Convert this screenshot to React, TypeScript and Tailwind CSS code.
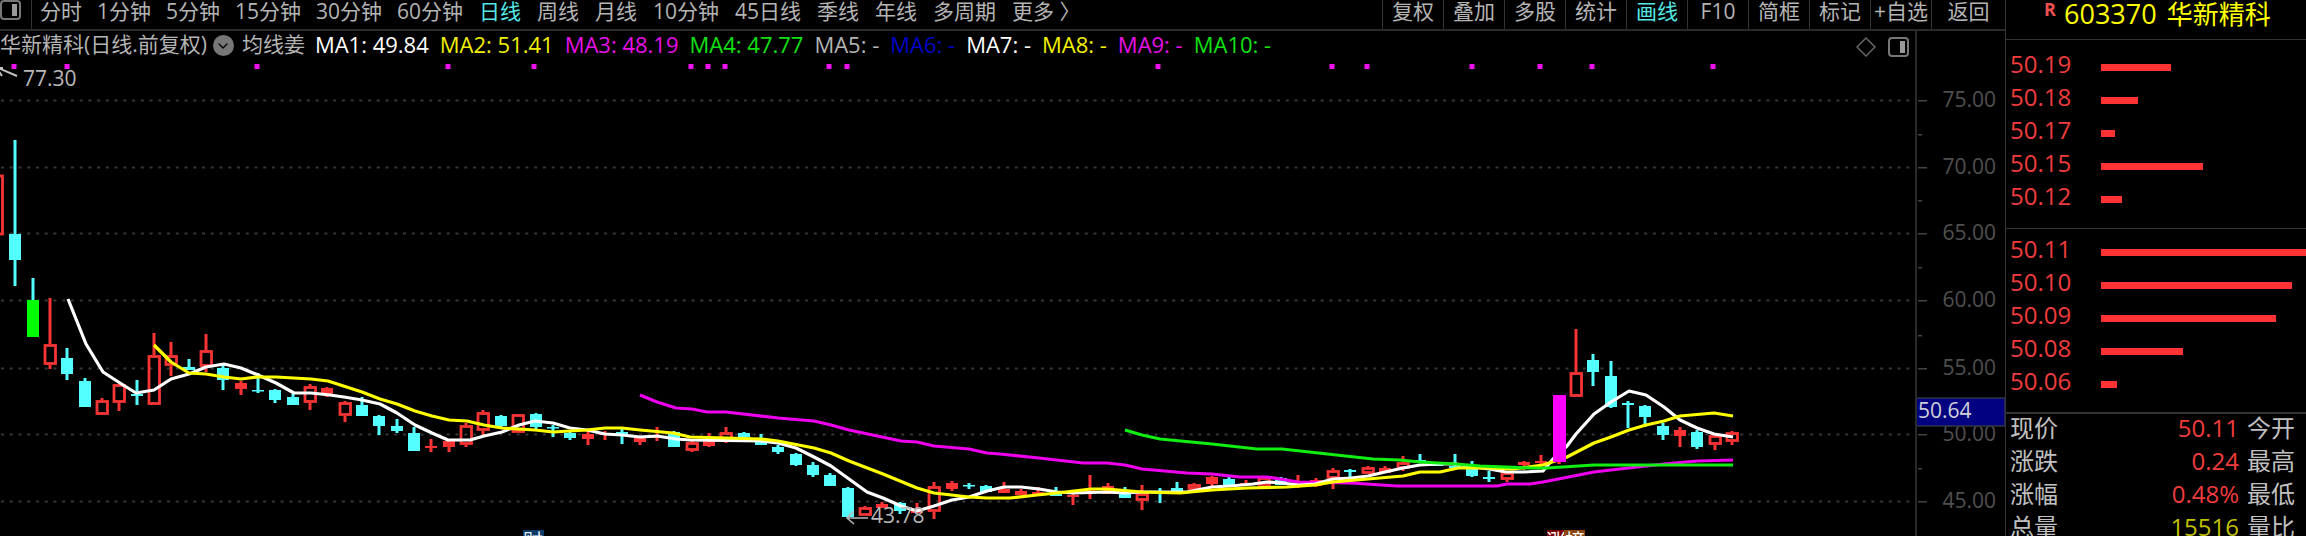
import { useState } from 'react';
import { ChevronDown } from 'lucide-react';

type Kind = 'up' | 'upFill' | 'down' | 'drop' | 'limit';
// kind, high, body top, body bottom, low
type Candle = [Kind, number, number, number, number];

const STEP = 17.34;
const FIRST_X = 15.3;

const candles: Candle[] = [
  ['down', 140, 234, 260, 286], ['drop', 278, 300, 337, 337], ['up', 298, 344, 365, 369],
  ['down', 348, 358, 374, 380], ['down', 378, 381, 407, 407], ['up', 398, 400, 415, 415],
  ['up', 384, 384, 403, 411], ['down', 380, 394, 396, 405], ['up', 333, 355, 405, 405],
  ['up', 342, 355, 366, 376], ['down', 359, 367, 370, 370], ['up', 334, 350, 367, 372],
  ['down', 365, 368, 380, 390], ['upFill', 381, 383, 389, 395], ['down', 373, 390, 391, 393],
  ['down', 389, 390, 400, 403], ['down', 394, 397, 405, 405], ['up', 384, 386, 403, 410],
  ['upFill', 387, 388, 394, 397], ['up', 401, 402, 416, 422], ['down', 397, 405, 416, 416],
  ['down', 415, 416, 426, 435], ['down', 419, 426, 431, 433], ['down', 427, 433, 451, 451],
  ['upFill', 439, 446, 448, 452], ['upFill', 440, 441, 447, 452], ['up', 423, 425, 445, 447],
  ['up', 410, 412, 431, 437], ['down', 415, 416, 426, 427], ['up', 414, 414, 433, 433],
  ['down', 413, 414, 427, 429], ['down', 425, 427, 428, 437], ['down', 431, 433, 438, 440],
  ['upFill', 431, 434, 439, 445], ['upFill', 431, 433, 435, 440], ['down', 429, 432, 434, 444],
  ['upFill', 436, 438, 442, 445], ['upFill', 427, 436, 438, 441], ['down', 431, 432, 447, 447],
  ['up', 441, 442, 451, 452], ['upFill', 433, 440, 446, 447], ['up', 427, 432, 440, 443],
  ['down', 432, 433, 437, 440], ['down', 434, 438, 445, 445], ['down', 445, 447, 452, 454],
  ['down', 453, 454, 465, 466], ['down', 462, 465, 475, 477], ['down', 473, 475, 486, 486],
  ['down', 487, 488, 517, 517], ['up', 506, 507, 516, 516], ['upFill', 502, 504, 508, 508],
  ['down', 502, 503, 511, 514], ['upFill', 503, 509, 513, 513], ['up', 482, 486, 512, 519],
  ['upFill', 481, 483, 489, 491], ['down', 483, 485, 486, 489], ['down', 485, 486, 492, 492],
  ['upFill', 482, 489, 493, 493], ['upFill', 489, 491, 495, 495], ['upFill', 487, 492, 495, 495],
  ['down', 487, 493, 496, 496], ['upFill', 493, 495, 497, 505], ['upFill', 475, 489, 490, 499],
  ['upFill', 483, 486, 494, 494], ['down', 487, 493, 498, 498], ['up', 485, 493, 501, 510],
  ['down', 488, 492, 493, 503], ['down', 482, 488, 491, 491], ['up', 483, 484, 490, 490],
  ['upFill', 476, 477, 484, 487], ['down', 477, 479, 485, 485], ['upFill', 480, 483, 485, 485],
  ['up', 477, 477, 486, 486], ['down', 477, 478, 485, 485], ['upFill', 475, 484, 487, 488],
  ['upFill', 478, 480, 486, 487], ['up', 468, 470, 479, 489], ['down', 469, 470, 472, 477],
  ['up', 466, 467, 474, 474], ['upFill', 466, 468, 473, 473], ['up', 456, 462, 469, 471],
  ['down', 454, 460, 463, 463], ['down', 462, 464, 466, 466], ['down', 454, 466, 468, 468],
  ['down', 461, 469, 476, 477], ['down', 471, 477, 479, 482], ['up', 472, 472, 480, 482],
  ['upFill', 461, 462, 465, 470], ['upFill', 455, 461, 463, 464], ['limit', 395, 395, 462, 464],
  ['up', 329, 372, 397, 397], ['down', 354, 360, 372, 386], ['down', 361, 376, 407, 408],
  ['down', 401, 403, 405, 428], ['down', 405, 406, 417, 427], ['down', 423, 426, 435, 440],
  ['upFill', 427, 430, 436, 447], ['down', 430, 432, 447, 449], ['up', 435, 435, 445, 450],
  ['up', 431, 432, 442, 445],
];

const colors: Record<Kind, string> = {
  up: '#f83434',
  upFill: '#ff3333',
  down: '#54ffff',
  drop: '#00ff00',
  limit: '#ff00ff',
};

const averages = [
  {
    color: '#ee00ee',
    points:
      '640,395 657,402 676,408 692,409 707,412 726,412 778,418 814,421 831,425 849,430 901,441 917,442 934,446 969,449 987,453 1000,454 1039,458 1083,463 1107,463 1125,465 1142,469 1187,473 1212,474 1240,477 1267,477 1298,482 1351,483 1397,486 1497,486 1507,484 1530,484 1543,482 1594,472 1611,470 1664,464 1697,461 1733,460',
  },
  {
    color: '#ffffff',
    points:
      '68,299 86,344 103,372 120,383 136,393 154,390 171,379 189,374 206,367 224,364 241,368 258,375 276,383 294,393 311,393 330,395 344,397 362,400 380,404 397,413 415,425 432,433 448,440 470,440 484,436 502,432 519,425 535,421 553,423 570,428 587,430 605,434 622,435 640,437 657,436 676,439 690,440 761,441 778,443 796,448 814,457 831,466 849,479 867,492 883,498 901,506 917,511 934,506 952,500 969,497 987,491 1004,487 1021,487 1039,489 1057,492 1074,493 1107,492 1125,493 1142,492 1187,492 1212,487 1230,486 1253,484 1267,482 1282,483 1298,485 1315,484 1333,479 1351,478 1368,476 1385,472 1403,468 1420,465 1438,464 1456,464 1473,467 1489,469 1506,472 1524,472 1543,471 1553,459 1567,446 1576,434 1594,414 1611,402 1629,391 1646,395 1664,407 1680,420 1697,428 1714,434 1733,437',
  },
  {
    color: '#ffff00',
    points:
      '154,345 171,362 189,373 206,374 224,377 241,379 258,377 276,377 311,379 328,381 362,392 380,399 397,404 415,411 432,416 449,420 467,421 484,425 502,428 535,430 553,432 570,431 587,430 605,428 622,428 640,430 673,433 690,437 727,438 761,439 778,441 814,448 831,453 849,461 883,474 917,488 934,493 969,497 987,498 1010,498 1037,495 1057,493 1091,489 1107,489 1142,492 1180,493 1212,490 1247,488 1287,487 1315,485 1333,482 1368,479 1403,476 1420,472 1440,472 1458,468 1489,468 1513,469 1543,465 1567,457 1594,443 1611,437 1629,430 1646,425 1664,421 1680,416 1714,413 1733,416',
  },
  {
    color: '#11ee11',
    points:
      '1125,430 1142,435 1160,439 1212,444 1257,449 1282,449 1373,459 1400,460 1420,462 1456,464 1480,466 1530,468 1547,468 1594,465 1733,465',
  },
];

const signals = [14, 67, 257, 448, 534, 691, 708, 725, 829, 847, 1158, 1332, 1367, 1472, 1540, 1592, 1713];

const axis = [
  { label: '75.00', y: 100 },
  { label: '70.00', y: 167 },
  { label: '65.00', y: 233 },
  { label: '60.00', y: 300 },
  { label: '55.00', y: 368 },
  { label: '50.00', y: 434 },
  { label: '45.00', y: 501 },
];
const minorTicks = [134, 200, 267, 335, 401, 468];

const minutes = ['分时', '1分钟', '5分钟', '15分钟', '30分钟', '60分钟'];
const periods = ['日线', '周线', '月线', '10分钟', '45日线', '季线', '年线', '多周期', '更多 〉'];
const tools = ['复权', '叠加', '多股', '统计', '画线', 'F10', '简框', '标记', '+自选', '返回'];

const indicators = [
  { text: 'MA1: 49.84', color: 'text-white' },
  { text: 'MA2: 51.41', color: 'text-[#f0f000]' },
  { text: 'MA3: 48.19', color: 'text-[#e810e8]' },
  { text: 'MA4: 47.77', color: 'text-[#10e010]' },
  { text: 'MA5: -', color: 'text-[#b4b4b4]' },
  { text: 'MA6: -', color: 'text-[#0000c8]' },
  { text: 'MA7: -', color: 'text-white' },
  { text: 'MA8: -', color: 'text-[#f0f000]' },
  { text: 'MA9: -', color: 'text-[#e810e8]' },
  { text: 'MA10: -', color: 'text-[#10e010]' },
];

const asks = [
  { price: '50.19', size: 70 },
  { price: '50.18', size: 37 },
  { price: '50.17', size: 14 },
  { price: '50.15', size: 102 },
  { price: '50.12', size: 21 },
];
const bids = [
  { price: '50.11', size: 205 },
  { price: '50.10', size: 191 },
  { price: '50.09', size: 175 },
  { price: '50.08', size: 82 },
  { price: '50.06', size: 16 },
];

const stats = [
  { name: '现价', value: '50.11', color: 'text-[#f03c3c]', next: '今开' },
  { name: '涨跌', value: '0.24', color: 'text-[#f03c3c]', next: '最高' },
  { name: '涨幅', value: '0.48%', color: 'text-[#f03c3c]', next: '最低' },
  { name: '总量', value: '15516', color: 'text-[#c0c000]', next: '量比' },
];

function PanelIcon() {
  return (
    <svg width="21" height="20" viewBox="0 0 21 20" fill="none">
      <rect x="1" y="1" width="19" height="18" rx="3" stroke="#777" strokeWidth="2" />
      <rect x="12" y="4" width="5" height="12" fill="#999" />
    </svg>
  );
}

function CandleShape({ candle, index }: { candle: Candle; index: number }) {
  const [kind, high, top, bottom, low] = candle;
  const x = Math.round(FIRST_X + index * STEP);
  const color = colors[kind];
  const wick = kind === 'drop' ? colors.down : kind === 'limit' ? colors.up : color;
  return (
    <g>
      {high < top && <rect x={x - 1.5} y={high} width="3" height={top - high} fill={wick} />}
      {low > bottom && <rect x={x - 1.5} y={bottom} width="3" height={low - bottom} fill={wick} />}
      {kind === 'up' ? (
        <rect x={x - 5} y={top + 1.5} width="10.5" height={Math.max(bottom - top - 3, 1)} fill="none" stroke={color} strokeWidth="2.8" />
      ) : (
        <rect x={x - 6} y={top} width={kind === 'limit' ? 13 : 12} height={Math.max(bottom - top, 1.5)} fill={color} />
      )}
    </g>
  );
}

function Chart() {
  const limitIndex = candles.findIndex(c => c[0] === 'limit');
  return (
    <svg className="h-full min-w-0 flex-1 font-['Open_Sans','Noto_Sans_CJK_SC',sans-serif]" viewBox="0 60 1915 476" preserveAspectRatio="xMaxYMin slice">
      {axis.map(a => (
        <line key={a.label} x1="1" x2="1914" y1={a.y + 0.5} y2={a.y + 0.5} stroke="#363636" strokeWidth="2" strokeDasharray="3 5.74" />
      ))}
      {signals.map(x => (
        <rect key={x} x={x - 2.5} y="64" width="5" height="5" fill="#f010f0" />
      ))}
      <path d="M-4 67 L17 76 M-4 68 L3 68 M-2 70 L2 76" stroke="#c4c4c4" strokeWidth="2" fill="none" />
      <text x="23" y="86" fontSize="21" fill="#b8b8b8">77.30</text>
      <rect x="-8" y="176" width="10.5" height="58" fill="none" stroke="#f83434" strokeWidth="2.8" />
      {candles.map((c, i) => (
        <CandleShape key={i} candle={c} index={i} />
      ))}
      {averages.map(a => (
        <polyline key={a.color} points={a.points} fill="none" stroke={a.color} strokeWidth="3.2" strokeLinejoin="round" />
      ))}
      {/* limit-up bar sits over the average lines */}
      <CandleShape candle={candles[limitIndex]} index={limitIndex} />
      <path d="M868 518 H847 M854 511 L847 518 L854 524" stroke="#b8b8b8" strokeWidth="1.6" fill="none" />
      <text x="871" y="523" fontSize="21" fill="#b8b8b8">43.78</text>
      <rect x="523" y="530" width="21" height="22" fill="#0a3a6a" />
      <text x="523" y="549" fontSize="20" fill="#e8e8e8">财</text>
      <rect x="1547" y="530" width="18" height="22" fill="#7a0000" />
      <text x="1546" y="549" fontSize="20" fill="#ffffff">涨</text>
      <rect x="1564" y="530" width="21" height="22" fill="#8a4510" />
      <text x="1565" y="549" fontSize="20" fill="#ffffff">榜</text>
    </svg>
  );
}

function PriceAxis() {
  return (
    <svg className="h-full w-[90px] shrink-0 border-l-2 border-[#2a2a2a] font-['Open_Sans',sans-serif]" viewBox="0 60 88 476" preserveAspectRatio="xMinYMin slice">
      {axis.map(a => (
        <g key={a.label}>
          <rect x="1" y={a.y} width="9" height="1.5" fill="#444" />
          <text x="79" y={a.y + 7} textAnchor="end" fontSize="21" fill="#505050">{a.label}</text>
        </g>
      ))}
      {minorTicks.map(y => (
        <rect key={y} x="1" y={y} width="4" height="1.5" fill="#444" />
      ))}
      <rect x="-1" y="398" width="89" height="28" fill="#000080" stroke="#33334a" strokeWidth="1.5" />
      <text x="1" y="418" fontSize="21" fill="#d0d0d8">50.64</text>
    </svg>
  );
}

function Book({ rows }: { rows: { price: string; size: number }[] }) {
  return (
    <ul>
      {rows.map(r => (
        <li key={r.price} className="flex h-[33px] items-center pl-1">
          <span className="w-[91px] shrink-0 pb-0.5 text-2xl leading-7 text-[#f03c3c]">{r.price}</span>
          <span className="mt-1.5 h-[7px] shrink-0 bg-[#ff3333]" style={{ width: r.size }} />
        </li>
      ))}
    </ul>
  );
}

export default function App() {
  const [period, setPeriod] = useState('日线');
  const [tool, setTool] = useState('画线');

  const periodButton = (p: string) => (
    <button key={p} onClick={() => setPeriod(p)} className={p === period ? 'text-[#54e8e8]' : ''}>
      {p}
    </button>
  );

  return (
    <div className="flex h-screen overflow-hidden bg-black font-['Open_Sans','Noto_Sans_CJK_SC',sans-serif] text-[#b4b4b4]">
      <main className="flex min-w-0 flex-1 flex-col">
        <nav className="flex h-[31px] shrink-0 justify-between border-b-2 border-[#2a2a2a] text-[21px] leading-5 whitespace-nowrap">
          <div className="flex min-w-0">
            <button aria-label="侧栏" className="flex w-8 shrink-0 items-start border-r border-[#333]">
              <PanelIcon />
            </button>
            <div className="flex gap-[15px] pb-2 pl-2">{minutes.map(periodButton)}</div>
            <div className="flex gap-4 pb-2 pl-4">{periods.map(periodButton)}</div>
          </div>
          <div className="flex shrink-0 bg-black">
            {tools.map(t => (
              <button
                key={t}
                onClick={() => setTool(t)}
                className={`min-w-[61px] border-l border-[#333] pb-2 last:w-[74px] ${t === tool ? 'text-[#54e8e8]' : ''}`}
              >
                {t}
              </button>
            ))}
          </div>
        </nav>

        <div className="flex h-[29px] shrink-0 text-[21px] leading-6 whitespace-nowrap">
          <div className="flex min-w-0 flex-1 items-center">
            <h1 className="pb-1">华新精科(日线.前复权)</h1>
            <button aria-label="选择指标" className="mr-2 ml-1.5 flex size-[21px] shrink-0 items-center justify-center rounded-full bg-[#777] text-black">
              <ChevronDown size={16} />
            </button>
            <span className="pb-1">均线姜</span>
            <div className="flex gap-[11px] pb-1 pl-2.5 text-[22px]">
              {indicators.map(m => (
                <span key={m.text} className={m.color}>{m.text}</span>
              ))}
            </div>
          </div>
          <div className="flex items-center gap-3 pt-0.5 pr-1.5">
            <svg width="20" height="20" viewBox="0 0 20 20" fill="none" stroke="#666" strokeWidth="1.5">
              <path d="M10 1 L19 10 L10 19 L1 10 Z" />
            </svg>
            <button aria-label="展开侧栏">
              <PanelIcon />
            </button>
          </div>
          <div className="w-[90px] shrink-0 border-l-2 border-[#2a2a2a]" />
        </div>

        <div className="flex min-h-0 flex-1">
          <Chart />
          <PriceAxis />
        </div>
      </main>

      <aside className="w-[301px] shrink-0 border-l border-[#333]">
        <header className="flex h-10 border-b border-[#333] pl-[38px] whitespace-nowrap">
          <span className="w-5 text-lg leading-[18px] font-bold text-[#f05050]">R</span>
          <h2 className="flex gap-2.5 text-[27px] leading-7 text-[#ffff00]">
            <span>603370</span>
            <span className="text-[26px]">华新精科</span>
          </h2>
        </header>
        <section className="border-b border-[#333] pt-2 pb-[15px]">
          <Book rows={asks} />
        </section>
        <section className="border-b-2 border-[#333] pt-1 pb-[14px]">
          <Book rows={bids} />
        </section>
        <table className="w-full text-2xl leading-7">
          <tbody>
            {stats.map(s => (
              <tr key={s.name} className="h-[33px] align-top">
                <th scope="row" className="p-0 pl-1 text-left font-normal text-[#c0c0c0]">{s.name}</th>
                <td className={`p-0 text-right ${s.color}`}>{s.value}</td>
                <th scope="row" className="w-[67px] p-0 pl-2 text-left font-normal text-[#c0c0c0]">{s.next}</th>
              </tr>
            ))}
          </tbody>
        </table>
      </aside>
    </div>
  );
}
